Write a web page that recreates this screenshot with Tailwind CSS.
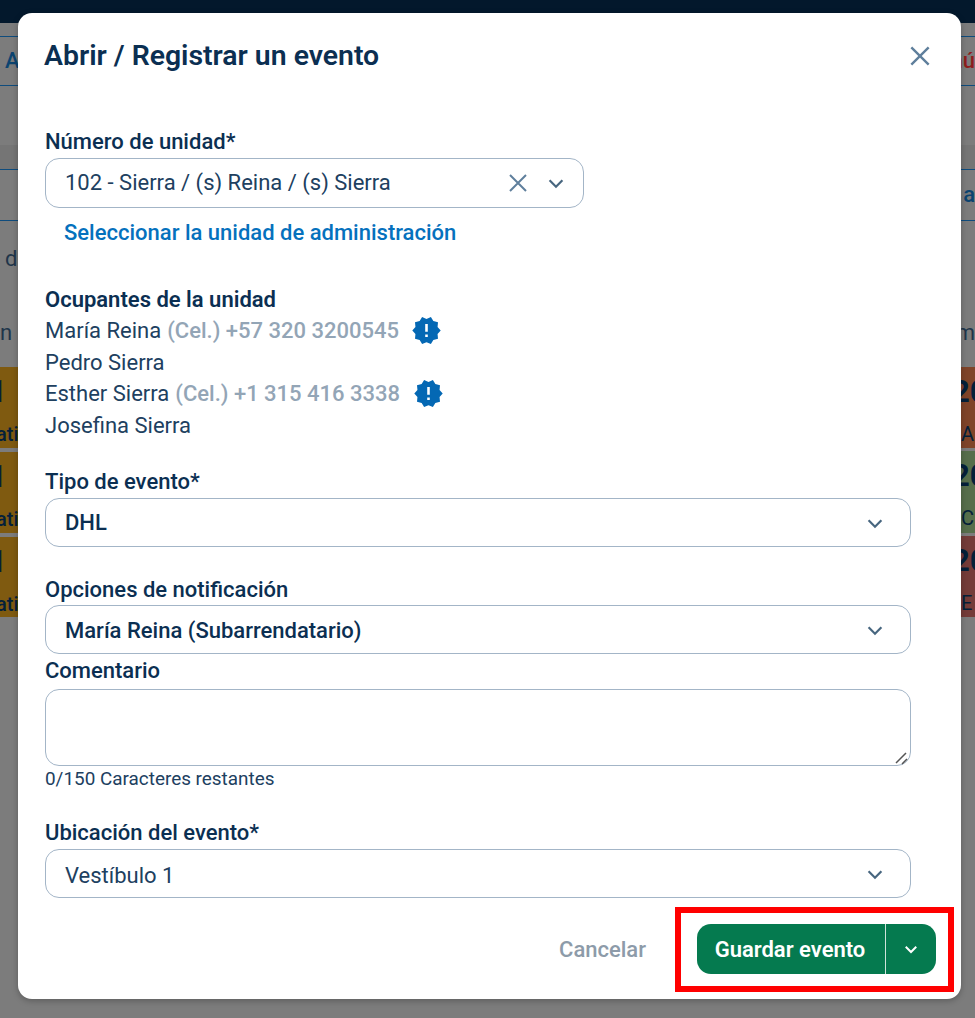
<!DOCTYPE html>
<html lang="es">
<head>
  <meta charset="UTF-8" />
  <title>Abrir / Registrar un evento</title>
  <script src="https://cdn.jsdelivr.net/npm/@tailwindcss/browser@4"></script>
</head>
<body class="relative h-[1018px] w-[975px] overflow-hidden bg-[#7c7c7c] font-['Roboto',sans-serif] text-[#0b2f52]">

  <!-- Page behind the modal -->
  <div class="flex h-full flex-col">
    <div class="h-[23px] bg-[#03182c]"></div>
    <div class="mt-[13px] flex h-[50px] items-center justify-between border-y border-[#0f4c7d] text-[22px] font-medium leading-[30px] text-[#0c4470]">
      <span class="pl-[5px]">A</span>
      <span class="text-[#8f1d1d]">nú</span>
    </div>
    <div class="mt-[59px] h-[24px] bg-[#757575]"></div>
    <div class="flex h-[52px] items-center justify-end border-y border-[#0f4c7d] text-[22px] font-medium leading-[30px] text-[#0c4470]">a</div>
    <div class="pl-[5px] pt-[23px] text-[22px] leading-[30px] text-[#20354a]">d</div>
    <div class="mt-[44px] flex justify-between text-[22px] leading-[30px] text-[#20354a]"><span>n c</span><span>m</span></div>
    <div class="mt-[19px] flex justify-between">
      <div class="flex w-[18px] flex-col gap-[4px] overflow-hidden text-[#04203a]">
        <div class="h-[81px] bg-[#7f5a10] leading-none"><div class="-ml-[11px] pt-[9px] text-[31px] font-bold">1</div><div class="-ml-[4px] pt-[17px] text-[20px] font-medium">ati</div></div>
        <div class="h-[81px] bg-[#7f5a10] leading-none"><div class="-ml-[11px] pt-[9px] text-[31px] font-bold">1</div><div class="-ml-[4px] pt-[17px] text-[20px] font-medium">ati</div></div>
        <div class="h-[80px] bg-[#7f5a10] leading-none"><div class="-ml-[11px] pt-[9px] text-[31px] font-bold">1</div><div class="-ml-[4px] pt-[17px] text-[20px] font-medium">ati</div></div>
      </div>
      <div class="flex w-[14px] flex-col gap-[3px] overflow-hidden text-[#04203a]">
        <div class="h-[81px] whitespace-nowrap bg-[#7f4429] leading-none"><div class="-ml-[9px] pt-[9px] text-[31px] font-bold">20</div><div class="pt-[17px] text-[20px]">A</div></div>
        <div class="h-[82px] whitespace-nowrap bg-[#566e4b] leading-none"><div class="-ml-[9px] pt-[9px] text-[31px] font-bold">20</div><div class="pt-[17px] text-[20px]">C.</div></div>
        <div class="h-[81px] whitespace-nowrap bg-[#743c39] leading-none"><div class="-ml-[9px] pt-[9px] text-[31px] font-bold">20</div><div class="pt-[17px] text-[20px]">E</div></div>
      </div>
    </div>
  </div>

  <!-- Modal -->
  <div class="absolute left-[18px] top-[13px] flex h-[986px] w-[943px] flex-col rounded-[14px] bg-white pl-[27px] pr-[50px] shadow-[0_2px_6px_rgba(0,0,0,0.25)]">

    <div class="flex h-[86px] items-center justify-between">
      <h1 class="-ml-[1px] text-[28.4px] font-semibold">Abrir / Registrar un evento</h1>
      <button class="-mr-[25px] text-[#5f7f9c]">
        <svg class="h-[32px] w-[32px]" viewBox="0 0 24 24" fill="none" stroke="currentColor" stroke-width="1.8"><path d="M5.5 5.5l13 13M18.5 5.5l-13 13" /></svg>
      </button>
    </div>

    <label class="mt-[30px] text-[22px] font-medium leading-[26px]">Número de unidad*</label>
    <div class="mt-[3px] flex h-[50px] w-[539px] items-center rounded-[14px] border-[1.5px] border-[#a3b5c7] pl-[19px] pr-[16px] text-[22px] text-[#20405f]">
      <span class="flex-1 pb-[2px]">102 - Sierra / (s) Reina / (s) Sierra</span>
      <svg class="mr-[15px] h-[24px] w-[24px] text-[#5f7f9c]" viewBox="0 0 24 24" fill="none" stroke="currentColor" stroke-width="2"><path d="M4 4l16 16M20 4L4 20" /></svg>
      <svg class="h-[22px] w-[22px] text-[#47667f]" viewBox="0 0 24 24" fill="none" stroke="currentColor" stroke-width="2.4"><path d="M5 9l7 7 7-7" /></svg>
    </div>
    <a class="ml-[19px] mt-[10px] text-[22px] font-medium leading-[30px] text-[#0571bd]">Seleccionar la unidad de administración</a>

    <div class="mt-[39px] text-[22px] font-semibold leading-[26px]">Ocupantes de la unidad</div>
    <div class="mt-[2px] text-[22px] text-[#20405f]">
      <div class="flex h-[31.5px] items-center leading-[31.5px]">María Reina <span class="ml-[6px] font-medium text-[#93a5b6]">(Cel.) +57 320 3200545</span>
        <svg class="ml-[12px] h-[31px] w-[31px] text-[#0468b4]" viewBox="0 0 24 24" fill="currentColor"><path d="M23 12l-2.44-2.78.34-3.68-3.61-.82-1.89-3.18L12 3 8.6 1.54 6.71 4.72l-3.61.81.34 3.68L1 12l2.44 2.78-.34 3.69 3.61.82 1.89 3.18L12 21l3.4 1.46 1.89-3.18 3.61-.82-.34-3.68L23 12zm-10 5h-2v-2h2v2zm0-4h-2V7h2v6z" /></svg>
      </div>
      <div class="h-[31.5px] leading-[31.5px]">Pedro Sierra</div>
      <div class="flex h-[31.5px] items-center leading-[31.5px]">Esther Sierra <span class="ml-[6px] font-medium text-[#93a5b6]">(Cel.) +1 315 416 3338</span>
        <svg class="ml-[13px] h-[31px] w-[31px] text-[#0468b4]" viewBox="0 0 24 24" fill="currentColor"><path d="M23 12l-2.44-2.78.34-3.68-3.61-.82-1.89-3.18L12 3 8.6 1.54 6.71 4.72l-3.61.81.34 3.68L1 12l2.44 2.78-.34 3.69 3.61.82 1.89 3.18L12 21l3.4 1.46 1.89-3.18 3.61-.82-.34-3.68L23 12zm-10 5h-2v-2h2v2zm0-4h-2V7h2v6z" /></svg>
      </div>
      <div class="h-[31.5px] leading-[31.5px]">Josefina Sierra</div>
    </div>

    <label class="mt-[28px] text-[22px] font-medium leading-[26px]">Tipo de evento*</label>
    <div class="mt-[3px] flex h-[49px] items-center justify-between rounded-[14px] border-[1.5px] border-[#a3b5c7] pl-[19px] pr-[24px] text-[22px] font-medium">
      <span>DHL</span>
      <svg class="h-[22px] w-[22px] text-[#47667f]" viewBox="0 0 24 24" fill="none" stroke="currentColor" stroke-width="2.4"><path d="M5 9l7 7 7-7" /></svg>
    </div>

    <label class="mt-[30px] text-[22px] font-medium leading-[26px]">Opciones de notificación</label>
    <div class="mt-[2px] flex h-[49px] items-center justify-between rounded-[14px] border-[1.5px] border-[#a3b5c7] pl-[19px] pr-[24px] text-[22px] font-medium">
      <span class="pt-[2px]">María Reina (Subarrendatario)</span>
      <svg class="h-[22px] w-[22px] text-[#47667f]" viewBox="0 0 24 24" fill="none" stroke="currentColor" stroke-width="2.4"><path d="M5 9l7 7 7-7" /></svg>
    </div>

    <label class="mt-[4px] text-[22px] font-medium leading-[26px]">Comentario</label>
    <div class="relative mt-[5px] h-[77px] rounded-[14px] border-[1.5px] border-[#a3b5c7]">
      <svg class="absolute bottom-0 right-[2px] h-[14px] w-[14px] text-[#555]" viewBox="0 0 14 14" fill="none" stroke="currentColor" stroke-width="1.5"><path d="M2 12L12 2M8 13l5-5" /></svg>
    </div>
    <div class="mt-[2px] text-[18.9px] leading-[22px] text-[#20405f]">0/150 Caracteres restantes</div>

    <label class="mt-[30px] text-[22px] font-medium leading-[26px]">Ubicación del evento*</label>
    <div class="mt-[3px] flex h-[49px] items-center justify-between rounded-[14px] border-[1.5px] border-[#a3b5c7] pl-[19px] pr-[24px] text-[22px] text-[#20405f]">
      <span class="pt-[4px]">Vestíbulo 1</span>
      <svg class="h-[22px] w-[22px] text-[#47667f]" viewBox="0 0 24 24" fill="none" stroke="currentColor" stroke-width="2.4"><path d="M5 9l7 7 7-7" /></svg>
    </div>

    <div class="-mr-[25px] mt-[26px] flex items-center justify-end">
      <button class="mr-[51px] text-[22px] font-medium text-[#8d9ba9]">Cancelar</button>
      <div class="flex h-[50px] w-[239px] rounded-[14px] bg-[#057a4f] text-white">
        <button class="flex-1 border-r border-[#cfe3da] pr-[2px] text-[22px] font-semibold">Guardar evento</button>
        <button class="flex w-[50px] items-center justify-center">
          <svg class="h-[18px] w-[18px]" viewBox="0 0 24 24" fill="none" stroke="currentColor" stroke-width="2.6"><path d="M5 9l7 7 7-7" /></svg>
        </button>
      </div>
    </div>
  </div>

  <!-- Red highlight drawn over the screenshot -->
  <div class="absolute left-[675px] top-[907px] h-[85px] w-[279px] border-[6px] border-[#ff0000]"></div>
</body>
</html>
